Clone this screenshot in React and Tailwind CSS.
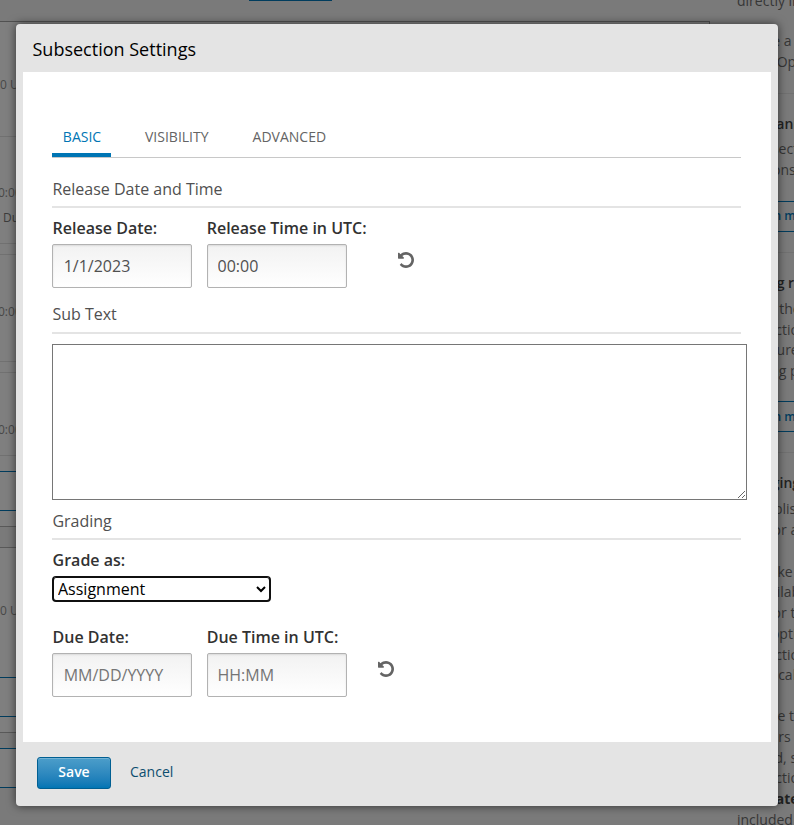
import React from "react";

const outlineRows = [
  { box: "h-[21px] bg-[#7a7a7a]", text: "" },
  { box: "h-[115px] border-t border-r border-t-[#515151] border-r-[#515151] pt-[55px]", text: "0 UTC" },
  { box: "h-[107px] border-t border-[#717171] pt-[48px]", text: "0:00 UTC", shift: "-ml-[2px]", due: "Due" },
  { box: "h-[11px] border-t border-[#717171]", text: "" },
  { box: "h-[107px] border-t border-[#717171] pt-[49px]", text: "0:00 UTC", shift: "-ml-[2px]" },
  { box: "h-[11px] border-t border-[#717171]", text: "" },
  { box: "h-[83px] border-t border-[#717171] pt-[49px]", text: "0:00 UTC", shift: "-ml-[2px]" },
  { box: "h-[16px] border-t border-[#717171]", text: "" },
  { box: "h-[40px] border-y border-[#003c5d]", text: "" },
  { box: "h-[15px]", text: "" },
  { box: "h-[21px] border-t border-[#595959] bg-[#7a7a7a]", text: "" },
  { box: "h-[130px] border-t border-[#595959] pt-[55px]", text: "0 UTC" },
  { box: "h-[40px] border-y border-[#003c5d]", text: "" },
  { box: "h-[15px]", text: "" },
  { box: "h-[16px] border-t border-[#595959] bg-[#7a7a7a]", text: "" },
  { box: "h-[40px] border-y border-[#003c5d]", text: "" },
  { box: "h-[37px] bg-[#7a7a7a]", text: "" },
];

function Outline() {
  return (
    <div className="w-[710px] shrink-0 bg-[#7f7f7f] text-xs leading-4 text-[#484848]">
      {outlineRows.map((r, i) => (
        <div key={i} className={r.box}>
          {r.text && <div className={r.shift}>{r.text}</div>}
          {r.due && <div className="mt-[9px] pl-[3px] font-medium text-[#3c3c3c]">{r.due}</div>}
        </div>
      ))}
    </div>
  );
}

function Lines({ items, className = "" }) {
  return (
    <div className={"leading-[20.7px] whitespace-nowrap " + className}>
      {items.map((t) => (
        <p key={t}>{t}</p>
      ))}
    </div>
  );
}

function LearnMore({ className }) {
  return (
    <div className={"flex h-[31px] items-center border-y border-[#003c5d] pl-[11px] text-xs font-semibold whitespace-nowrap text-[#003c5d] " + className}>
      Learn more
    </div>
  );
}

function Help() {
  return (
    <aside className="ml-[27px] w-[57px] shrink-0 overflow-hidden text-sm text-[#363636]">
      <Lines className="-mt-[9px]" items={["directly in"]} />
      <Lines className="mt-[19.5px]" items={["Create a", "units. Open"]} />
      <div className="mt-[20.2px] border-t border-[#717171]" />
      <h3 className="mt-[20px] leading-5 font-semibold whitespace-nowrap text-[#222]">Reorganizing</h3>
      <Lines className="mt-[5.6px]" items={["Drag sections", "locations"]} />
      <LearnMore className="mt-[19.9px]" />
      <div className="mt-[20px] border-t border-[#717171]" />
      <h3 className="mt-[20px] leading-5 font-semibold whitespace-nowrap text-[#222]">Setting release</h3>
      <Lines className="mt-[6.3px]" items={["Select the", "subsection", "configure", "grading policy"]} />
      <LearnMore className="mt-[19.7px]" />
      <div className="mt-[20px] border-t border-[#717171]" />
      <h3 className="mt-[20px] leading-5 font-semibold whitespace-nowrap text-[#222]">Changing</h3>
      <Lines className="mt-[6px]" items={["To publish", "icon for a"]} />
      <Lines className="mt-[20.9px]" items={["To make a", "unavailable", "icon for that", "Hide option", "subsections", "grade calc"]} />
      <Lines className="mt-[20.2px]" items={["To hide the", "learners", "passed, select", "subsection"]} />
      <p className="leading-[20.7px] font-bold whitespace-nowrap text-[#222]">due date</p>
      <Lines items={["included in"]} />
    </aside>
  );
}

function Undo({ className }) {
  return (
    <svg viewBox="0 128 1536 1536" className={"size-4 shrink-0 fill-[#646464] " + className}>
      <path d="M1536 896q0 156-61 298t-164 245-245 164-298 61q-172 0-327-72.5t-264-204.5q-7-10-6.5-22.5t8.5-20.5l137-138q10-9 25-9 16 2 23 12 73 95 179 147t225 52q104 0 198.5-40.5t163.5-109.5 109.5-163.5 40.5-198.5-40.5-198.5-109.5-163.5-163.5-109.5-198.5-40.5q-98 0-188 35.5t-160 101.5l137 138q31 30 14 69-17 40-59 40h-448q-26 0-45-19t-19-45v-448q0-42 40-59 39-17 69 14l130 129q107-101 244.5-156.5t284.5-55.5q156 0 298 61t245 164 164 245 61 298z" />
    </svg>
  );
}

function Heading({ children, className = "h-[31px]" }) {
  return (
    <h3 className={"w-[689px] border-b-2 border-[#e4e4e4] pl-[0.4px] leading-6 text-[#505050] " + className}>
      {children}
    </h3>
  );
}

function Field({ label, labelInset, inset, ...props }) {
  return (
    <label className="block min-w-[140px]">
      <span className={"block h-[28px] leading-6 font-semibold whitespace-nowrap text-[#323232] " + labelInset}>{label}</span>
      <input
        {...props}
        className={
          "block h-[44px] w-[140px] rounded-[2px] border border-[#b2b2b2] bg-linear-to-b from-[#f2f2f2] to-white text-base text-[#505050] shadow-[inset_0_1px_2px_rgba(0,0,0,0.1)] outline-none placeholder:text-[#757575] " +
          inset
        }
      />
    </label>
  );
}

export default function App() {
  return (
    <div className="relative flex h-[825px] w-[794px] overflow-hidden bg-[#7a7a7a] font-['Open_Sans','Noto_Sans',sans-serif]">
      <Outline />
      <Help />
      <div className="absolute top-[24px] left-[16px] flex h-[782px] w-[762px] flex-col rounded-[4px] bg-[#e4e4e4] px-[7px] shadow-[0_0_10px_rgba(0,0,0,0.6)]">
        <h2 className="h-[48px] pt-[11px] pl-[9.5px] text-lg leading-7 text-black">Subsection Settings</h2>
        <div className="h-[670px] bg-white pt-[52px] pl-[29px]">
          <nav className="flex h-[34px] w-[689px] border-b border-[#c8c8c8] text-sm leading-[26px] text-[#646464]">
            <button className="h-[33px] w-[59px] border-b-4 border-[#0075b4] pb-[3px] pl-px text-[#0075b4]">BASIC</button>
            <button className="ml-[34px] h-[26px]">VISIBILITY</button>
            <button className="ml-[44px] h-[26px]">ADVANCED</button>
          </nav>
          <Heading className="mt-[19px] h-[31px]">Release Date and Time</Heading>
          <div className="mt-[8px] flex gap-[15px]">
            <Field label="Release Date:" labelInset="pl-[0.6px]" defaultValue="1/1/2023" inset="px-[10.7px]" />
            <Field label="Release Time in UTC:" labelInset="-ml-[0.3px]" defaultValue="00:00" inset="px-[9.5px]" />
            <Undo className="mt-[36px] ml-[16px]" />
          </div>
          <Heading className="mt-[14px] h-[32px]">Sub Text</Heading>
          <textarea className="mt-[10px] block h-[156px] w-[695px] border border-[#767676] bg-white outline-none" />
          <Heading className="mt-[9px] h-[31px]">Grading</Heading>
          <label className="mt-[8px] block h-[28px] pl-[0.6px] leading-6 font-semibold text-[#323232]">Grade as:</label>
          <select className="block h-[26px] w-[219px] rounded-[4px] border-2 border-t border-[#101010] bg-white pb-px text-base text-black shadow-[inset_0_1px_0_#101010] outline-none">
            <option>Assignment</option>
          </select>
          <div className="mt-[23px] flex gap-[15px]">
            <Field label="Due Date:" labelInset="pl-[0.6px]" placeholder="MM/DD/YYYY" inset="px-[10.7px]" />
            <Field label="Due Time in UTC:" labelInset="-ml-[0.3px]" placeholder="HH:MM" inset="px-[9.5px]" />
            <Undo className="mt-[36px] ml-[15.5px]" />
          </div>
        </div>
        <div className="flex items-center pt-[15px] pl-[14px] text-sm">
          <button className="h-[32px] w-[74px] rounded-[3px] border border-[#005f92] bg-linear-to-b from-[#4c9eca] to-[#0075b4] pb-[2px] font-semibold text-white shadow-[inset_0_1px_0_#74b3d5]">
            Save
          </button>
          <button className="ml-[19px] pb-[2px] text-[#0d4e6f]">Cancel</button>
        </div>
      </div>
      <div className="absolute top-0 left-[249px] h-px w-[83px] bg-[#003c5d]" />
    </div>
  );
}
